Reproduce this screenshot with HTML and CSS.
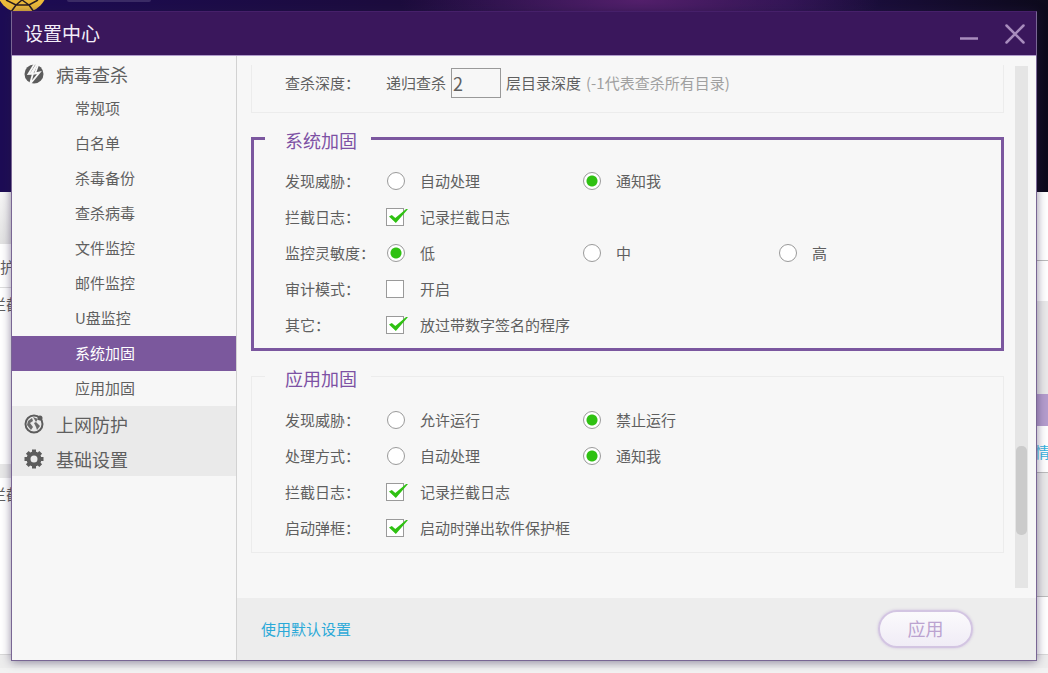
FILE: index.html
```html
<!DOCTYPE html>
<html lang="zh-CN">
<head>
    <meta charset="UTF-8">
    <meta name="viewport" content="width=device-width, initial-scale=1.0">
    <title>设置中心</title>
    <link rel="stylesheet" href="styles.css">
</head>
<body>
    <!-- main window, mostly covered by the dialog -->
    <div class="backdrop">
        <div class="hero">
            <svg class="badge" width="46" height="13" viewBox="0 0 46 13">
                <circle cx="22" cy="-13" r="26" fill="#edbb3a"/>
                <path d="M6 0L16 5H29L38 0M16 5L11 12M29 5L34 12M16 5L22 0L29 5" fill="none" stroke="#2a1d20" stroke-width="1.500"/>
            </svg>
            <span class="pill"></span>
        </div>
        <div class="underlay">
            <div class="side left">
                <div class="bar"></div>
                <div class="cell name">护</div>
                <div class="cell log"><span>拦截</span></div>
                <div class="band"></div>
                <div class="cell log"><span>拦截</span></div>
            </div>
            <div class="side right">
                <div class="blank"></div>
                <div class="blank short"></div>
                <div class="gray"></div>
                <div class="tab"></div>
                <div class="cell more">情</div>
                <div class="gray tall"></div>
                <div class="blank end"></div>
            </div>
        </div>
        <div class="status"></div>
    </div>

    <div class="dialog">
        <header class="titlebar">
            <h1>设置中心</h1>
            <div class="buttons">
                <button type="button" aria-label="最小化">
                    <svg width="20" height="20" viewBox="0 0 20 20"><path d="M1 14.500H19" stroke="#a88cbd" stroke-width="2.500"/></svg>
                </button>
                <button type="button" aria-label="关闭">
                    <svg width="20" height="20" viewBox="0 0 20 20"><path d="M1.500 1.500L18.500 18.500M18.500 1.500L1.500 18.500" stroke="#a88cbd" stroke-width="2.500" stroke-linecap="round"/></svg>
                </button>
            </div>
        </header>

        <div class="body">
            <nav class="sidebar">
                <a class="group" href="#virus">
                    <svg width="20" height="20" viewBox="0 0 20 20">
                        <circle cx="10" cy="10" r="9.500" fill="#5c5c5c"/>
                        <path d="M10.500 0L4.500 10L9 9.500L6 20L15.500 8.500L11 9.500L14.500 0" fill="none" stroke="#f7f7f7" stroke-width="1.800"/>
                        <path d="M12 0L6.500 8.500L4.500 10.500L9 9.500L10.500 7.500L14 0Z" fill="#f7f7f7"/>
                    </svg>
                    病毒查杀
                </a>
                <a href="#general">常规项</a>
                <a href="#white">白名单</a>
                <a href="#backup">杀毒备份</a>
                <a href="#scan">查杀病毒</a>
                <a href="#file">文件监控</a>
                <a href="#mail">邮件监控</a>
                <a href="#usb">U盘监控</a>
                <a class="active" href="#system">系统加固</a>
                <a href="#app">应用加固</a>
                <a class="group closed" href="#net">
                    <svg width="20" height="20" viewBox="0 0 20 20">
                        <circle cx="10" cy="10" r="8.500" fill="none" stroke="#5c5c5c" stroke-width="2"/>
                        <path d="M4 7L8 4L9 7L6 9L9 13L7 16L3 11ZM9 3L14 5L12 8ZM10 9L12 8L16 12L13 16L12 13Z" fill="#6a6a6a"/>
                        <circle cx="16" cy="4" r="2.500" fill="#5c5c5c"/>
                    </svg>
                    上网防护
                </a>
                <a class="group closed" href="#base">
                    <svg width="20" height="20" viewBox="0 0 20 20">
                        <circle cx="10" cy="10" r="5.500" fill="none" stroke="#5c5c5c" stroke-width="4"/>
                        <path d="M10 .500V4M10 16V19.500M.500 10H4M16 10H19.500M3.300 3.300L5.800 5.800M14.200 14.200L16.700 16.700M16.700 3.300L14.200 5.800M5.800 14.200L3.300 16.700" stroke="#5c5c5c" stroke-width="4"/>
                    </svg>
                    基础设置
                </a>
            </nav>

            <main class="main">
                <div class="scroller">
                    <form class="settings" id="settings">
                        <fieldset class="cut">
                            <div class="row">
                                <label for="depth">查杀深度：</label>
                                <div class="depth">
                                    递归查杀
                                    <input type="text" id="depth" value="2">
                                    层目录深度
                                    <span class="hint">(-1代表查杀所有目录)</span>
                                </div>
                            </div>
                        </fieldset>

                        <fieldset class="current" id="system">
                            <legend>系统加固</legend>
                            <div class="row">
                                <span>发现威胁：</span>
                                <label><input type="radio" name="sysThreat">自动处理</label>
                                <label><input type="radio" name="sysThreat" checked>通知我</label>
                            </div>
                            <div class="row">
                                <span>拦截日志：</span>
                                <label><input type="checkbox" checked>记录拦截日志</label>
                            </div>
                            <div class="row">
                                <span>监控灵敏度：</span>
                                <label><input type="radio" name="level" checked>低</label>
                                <label><input type="radio" name="level">中</label>
                                <label><input type="radio" name="level">高</label>
                            </div>
                            <div class="row">
                                <span>审计模式：</span>
                                <label><input type="checkbox">开启</label>
                            </div>
                            <div class="row">
                                <span>其它：</span>
                                <label><input type="checkbox" checked>放过带数字签名的程序</label>
                            </div>
                        </fieldset>

                        <fieldset id="app">
                            <legend>应用加固</legend>
                            <div class="row">
                                <span>发现威胁：</span>
                                <label><input type="radio" name="appThreat">允许运行</label>
                                <label><input type="radio" name="appThreat" checked>禁止运行</label>
                            </div>
                            <div class="row">
                                <span>处理方式：</span>
                                <label><input type="radio" name="appMode">自动处理</label>
                                <label><input type="radio" name="appMode" checked>通知我</label>
                            </div>
                            <div class="row">
                                <span>拦截日志：</span>
                                <label><input type="checkbox" checked>记录拦截日志</label>
                            </div>
                            <div class="row">
                                <span>启动弹框：</span>
                                <label><input type="checkbox" checked>启动时弹出软件保护框</label>
                            </div>
                        </fieldset>
                    </form>
                    <div class="track"><div class="thumb"></div></div>
                </div>
                <footer class="footer">
                    <a href="#default">使用默认设置</a>
                    <button type="submit" form="settings" class="apply">应用</button>
                </footer>
            </main>
        </div>
    </div>
</body>
</html>
```
FILE: styles.css
```css
*{
    box-sizing: border-box;
}
body{
    margin: 0;
    height: 100vh;
    overflow: hidden;
    position: relative;
    font-family: "Noto Sans CJK SC", sans-serif;
    font-size: 15px;
    line-height: 24px;
    color: #5f5f5f;
}
a{
    text-decoration: none;
    color: inherit;
}
svg{
    display: block;
    flex: none;
}

/* window behind */
.backdrop{
    height: 100%;
    display: flex;
    flex-direction: column;
    background-color: #ededed;
}
.hero{
    flex: none;
    height: 192px;
    display: flex;
    align-items: flex-start;
    gap: 21px;
    background: radial-gradient(ellipse 240px 60px at 640px 0, #54206c, transparent),
        linear-gradient(to right, #1d0c55, #1c0c3c 40%, #21104a 75%, #0d0a1c);
}
.pill{
    width: 84px;
    height: 2px;
    background-color: #3b2c66;
    border-radius: 0 0 4px 4px;
}
.underlay{
    flex: 1;
    display: flex;
    justify-content: space-between;
    background-color: white;
}
.side{
    width: 12px;
    display: flex;
    flex-direction: column;
    overflow: hidden;
}
.side.right{
    width: 13px;
}
.bar{
    height: 52px;
    background: linear-gradient(to bottom, #f7f7f7, #e2e2e2);
}
.cell{
    white-space: nowrap;
}
.name{
    height: 44px;
    padding-top: 11px;
    border-bottom: 1px solid #ddd;
}
.log{
    height: 176px;
    display: flex;
    justify-content: center;
    padding-top: 4px;
}
.band{
    height: 14px;
    background-color: #e8e8e8;
}
.blank{
    height: 69px;
    border-bottom: 1px solid #bbb;
}
.blank.short{
    height: 40px;
    border: 0;
}
.gray{
    height: 93px;
    background-color: #e9e9e9;
}
.gray.tall{
    height: 124px;
    border-bottom: 1px solid #bbb;
}
.tab{
    height: 32px;
    background-color: #b49dcd;
}
.more{
    height: 47px;
    padding-top: 14px;
    border-bottom: 1px solid #bbb;
    color: #35b3e0;
}
.blank.end{
    flex: 1;
    border: 0;
}
.status{
    flex: none;
    height: 19px;
    border-top: 1px solid #d8d8d8;
    border-bottom: 5px solid #f2f2f2;
}

/* dialog */
.dialog{
    position: absolute;
    top: 11px;
    right: 11px;
    bottom: 12px;
    left: 11px;
    display: flex;
    flex-direction: column;
    border: 1px solid #796694;
    border-top-color: #46206a;
    background-color: #f7f7f7;
    box-shadow: 0 1px 9px rgba(40, 25, 70, 0.5);
}
.titlebar{
    flex: none;
    height: 44px;
    display: flex;
    align-items: center;
    justify-content: space-between;
    padding: 0 11px 0 12px;
    background-color: #3a175c;
    border-bottom: 1px solid #b09bcb;
}
.titlebar h1{
    margin: 0;
    padding-bottom: 2px;
    font-size: 19px;
    font-weight: normal;
    color: #f3eef8;
}
.buttons{
    display: flex;
    gap: 26px;
}
.buttons button{
    padding: 0;
    border: 0;
    background: none;
}
.body{
    flex: 1;
    min-height: 0;
    display: flex;
}
.sidebar{
    width: 225px;
    flex: none;
    display: flex;
    flex-direction: column;
    border-right: 1px solid #d2d2d2;
}
.sidebar a{
    height: 35px;
    display: flex;
    align-items: center;
    padding: 0 0 2px 63px;
}
.sidebar .group{
    padding: 0 0 0 12px;
    gap: 12px;
    font-size: 18px;
}
.sidebar .closed{
    background-color: #eaeaea;
}
.sidebar .active{
    background-color: #7b589d;
    color: white;
}
.main{
    flex: 1;
    display: flex;
    flex-direction: column;
}
.scroller{
    flex: 1;
    min-height: 0;
    display: flex;
    gap: 11px;
    padding: 9px 8px 10px 14px;
}
.settings{
    flex: 1;
    overflow: hidden;
}
fieldset{
    margin: 0 0 11px;
    padding: 12px 13px 6px;
    border: 1px solid #ececec;
}
fieldset.cut{
    padding: 0 13px 11px;
    border-top: 0;
}
fieldset.current{
    padding: 11px 11px 5px;
    border: 3px solid #7b579f;
}
legend{
    padding: 4px 14px 0 20px;
    font-size: 18px;
    color: #7d51a4;
}
.row{
    height: 36px;
    display: grid;
    grid-template-columns: 101px repeat(3, 196px);
    align-items: center;
    padding-left: 20px;
}
.row label{
    display: flex;
    align-items: center;
    gap: 16px;
}
.row .depth{
    grid-column: span 3;
    display: flex;
    align-items: center;
    gap: 5px;
}
.depth input{
    width: 50px;
    height: 30px;
    padding: 0 1px;
    border: 1px solid #999;
    background-color: transparent;
    color: inherit;
    font-family: inherit;
    font-size: 18px;
}
.hint{
    color: #a0a0a0;
}
.row input[type="radio"],
.row input[type="checkbox"]{
    appearance: none;
    flex: none;
    position: relative;
    width: 18px;
    height: 18px;
    margin: 0;
    border: 1px solid #9a9a9a;
    background-color: white;
}
.row input[type="radio"]{
    margin: 0 -1px 0 1px;
    border-radius: 50%;
}
.row input[type="radio"]:checked{
    background-image: radial-gradient(circle, #2fc112 5px, white 6px);
}
.row input[type="checkbox"]:checked::after{
    content: "";
    position: absolute;
    top: 0;
    left: 2px;
    width: 19px;
    height: 14px;
    background-color: #2fc112;
    clip-path: polygon(0 54%, 15% 42%, 33% 64%, 90% 0, 100% 0, 36% 100%);
}
.track{
    width: 13px;
    margin-top: 1px;
    padding: 380px 1px 0;
    background-color: #e5e5e5;
}
.thumb{
    height: 89px;
    border-radius: 5px;
    background-color: #cbcbcb;
}
.footer{
    flex: none;
    height: 62px;
    display: flex;
    align-items: center;
    justify-content: space-between;
    padding: 0 63px 0 24px;
    background-color: #ededed;
}
.footer a{
    color: #2ba9d8;
}
.apply{
    width: 95px;
    height: 38px;
    padding: 0 0 2px;
    border: 2px solid #d3c5e2;
    border-radius: 19px;
    background: linear-gradient(to bottom, #fbfafc, #f0ecf6);
    box-shadow: 0 0 3px #cfc2dd;
    color: #bba3d0;
    font-family: inherit;
    font-size: 18px;
}
```
